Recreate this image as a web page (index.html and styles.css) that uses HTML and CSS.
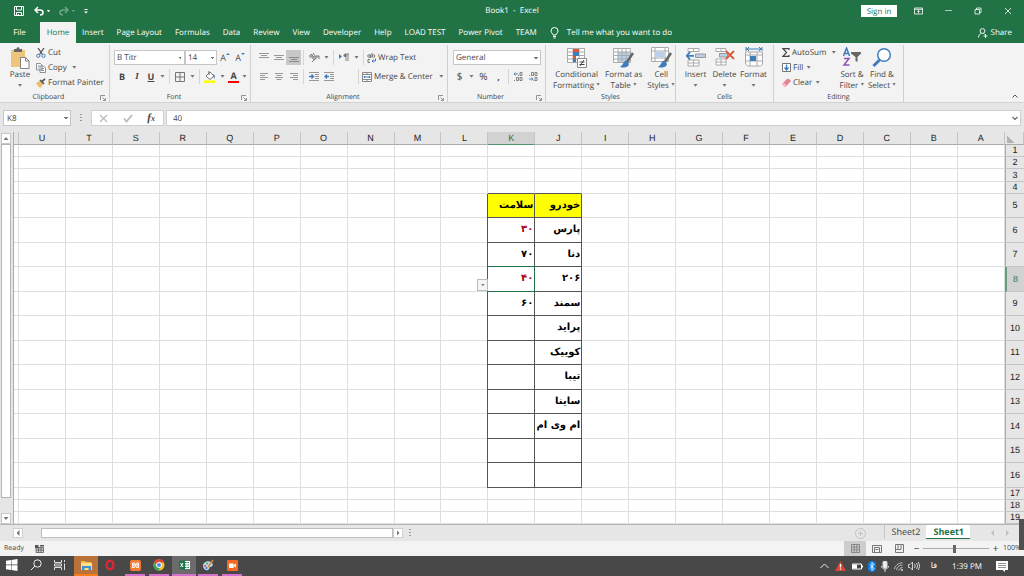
FILE: index.html
```html
<!DOCTYPE html>
<html lang="en">
<head>
<meta charset="utf-8">
<title>Book1 - Excel</title>
<link rel="stylesheet" href="styles.css">
</head>
<body>
<div class="app">
<header class="title">
  <div class="quick">
    <button aria-label="Save"><svg width="10" height="10" viewBox="0 0 10 10" fill="none" stroke="#fff"><path d="M.5.5h9v9h-9zM2.5.5v3.500h5v-3.500M2.500 9.500v-3h5v3M4.500 8v1.500"/></svg></button>
    <button aria-label="Undo"><svg width="10" height="10" viewBox="0 0 10 10" fill="none" stroke="#fff" stroke-width="1.500"><path d="M4 1 1 4l3 3M1 4h5c4 0 4 5 0 5"/></svg></button><i class="caret light"></i>
    <button class="dim" aria-label="Redo"><svg width="10" height="10" viewBox="0 0 10 10" fill="none" stroke="#fff" stroke-width="1.500"><path d="m6 1 3 3-3 3M9 4H4C0 4 0 9 4 9"/></svg></button><i class="caret light dim"></i>
    <button class="custom" aria-label="Customize"><svg width="4" height="5" viewBox="0 0 5 6" fill="#fff"><path d="M.5 0h4v1h-4zM0 3h5L2.500 5.500z"/></svg></button>
  </div>
  <h1>Book1&nbsp; -&nbsp; Excel</h1>
  <div class="window">
    <button class="signin">Sign in</button>
    <button aria-label="Ribbon display"><svg width="9" height="8" viewBox="0 0 9 8" fill="none" stroke="#fff" stroke-width=".8"><path d="M.5 1h8v6h-8zM.5 2.300h8M4.500 6.500v-3M3 4.800l1.500-1.500L6 4.800"/></svg></button>
    <button aria-label="Minimize"><svg width="8" height="8" viewBox="0 0 8 8" stroke="#a9cab6"><path d="M1 3.500h7"/></svg></button>
    <button aria-label="Restore"><svg width="8" height="8" viewBox="0 0 8 8" fill="none" stroke="#fff" stroke-width=".8"><path d="M1 2.500h4.500V7H1zM2.500 2.500V1H7v4.500H5.500"/></svg></button>
    <button aria-label="Close"><svg width="8" height="8" viewBox="0 0 8 8" stroke="#fff" stroke-width=".8"><path d="m1 1 6 6m0-6L1 7"/></svg></button>
  </div>
</header>
<nav class="tabs">
  <button>File</button><button class="on">Home</button><button>Insert</button><button>Page Layout</button><button>Formulas</button><button>Data</button><button>Review</button><button>View</button><button>Developer</button><button>Help</button><button>LOAD TEST</button><button>Power Pivot</button><button>TEAM</button>
  <button class="tell"><svg width="9" height="12" viewBox="0 0 9 12" fill="none" stroke="#fff"><path d="M3 8C3 6.500 1 6 1 4a3.500 3.500 0 0 1 7 0c0 2-2 2.500-2 4zM3 9.500h3M3.500 11h2"/></svg>Tell me what you want to do</button>
  <button class="share"><svg width="10" height="10" viewBox="0 0 10 10" fill="none" stroke="#fff" stroke-width=".9"><circle cx="4.500" cy="3" r="2.400"/><path d="M.5 9.500C.5 7 2 5.500 3.500 5.500M5.500 5.500l1 .8M7.500 6v4M5.500 8h4"/></svg>Share</button>
</nav>
<section class="ribbon">
  <div class="group clipboard">
    <div class="body">
      <button class="big"><svg width="20" height="22" viewBox="0 0 20 22"><path d="M1 3h14v17H1z" fill="#eec57c"/><path d="M4 2h2.500c0-2.500 3-2.500 3 0H12v3H4z" fill="#666"/><path d="M10.500 10.500h5l3.500 3.500v7.500h-8.500z" fill="#fff" stroke="#777" stroke-width=".9"/><path d="M15.500 10.500V14H19" fill="none" stroke="#777" stroke-width=".9"/></svg><span>Paste</span><i class="caret"></i></button>
      <div class="stack">
        <button><svg width="10" height="10" viewBox="0 0 10 10" fill="none"><path d="m2 0 4.500 6.500M8 0 3.500 6.500" stroke="#555" stroke-width="1.300"/><circle cx="2.300" cy="7.800" r="1.600" stroke="#4a7db5"/><circle cx="7.500" cy="7.800" r="1.600" stroke="#4a7db5"/></svg>Cut</button>
        <button><svg width="10" height="10" viewBox="0 0 10 10" fill="#fff" stroke="#777" stroke-width=".8"><path d="M.5.5h4l1.500 1.500v5H.5zM4 3h3.500l2 2v4.500H4z"/><path d="M1.800 3h2M1.800 5h1M5.500 5.500h2.500M5.500 7.500h2.500" stroke="#3f7cba"/></svg>Copy<i class="caret"></i></button>
        <button><svg width="10" height="10" viewBox="0 0 10 10"><path d="M0 5 4 3l3 3-2.500 4C3 9.500 1 7.500 0 5z" fill="#edbd6e"/><path d="m4 2 4 4M5.500 4 9 .8" stroke="#555" stroke-width="1.700"/></svg>Format Painter</button>
      </div>
    </div>
    <footer>Clipboard<svg class="launch" width="6" height="6" viewBox="0 0 6 6" fill="none" stroke="#888" stroke-width=".9"><path d="M.5 5V.5H5M2.500 2.500l2.500 2.500M5.500 3v2.500H3"/></svg></footer>
  </div>
  <div class="group font">
    <div class="body rows">
      <div class="row"><select class="face" aria-label="Font"><option>B Titr</option></select><select class="size" aria-label="Font size"><option>14</option></select><button class="w16 grow" aria-label="Increase font size">A<svg width="4" height="9" viewBox="0 0 4 9" fill="#3f7cba"><path d="M0 2h4L2 0z"/></svg></button><button class="w14 grow" aria-label="Decrease font size">A<svg width="4" height="9" viewBox="0 0 4 9" fill="#3f7cba"><path d="M0 0h4L2 2z"/></svg></button></div>
      <div class="row">
        <button class="w16"><b>B</b></button><button class="w14"><em>I</em></button><button class="w14"><u>U</u></button><i class="caret"></i><i class="sep"></i>
        <button class="w16"><svg width="10" height="10" viewBox="0 0 10 10" fill="none" stroke="#777"><path d="M.5.5h9v9h-9zM5 .5v9M.5 5h9"/></svg></button><i class="caret"></i><i class="sep"></i>
        <button class="w16"><svg width="12" height="12" viewBox="0 0 12 12"><path d="m2 5 4-4 4 4-4 3.500z" fill="#fff" stroke="#777"/><path d="M5 0v4" stroke="#666"/><path d="M9 3c2 1 2 3 1.500 5L9 5z" fill="#3f7cba"/><path d="M0 9.500h11V12H0z" fill="#ff0"/></svg></button><i class="caret"></i>
        <button class="acolor">A</button><i class="caret"></i>
      </div>
    </div>
    <footer>Font<svg class="launch" width="6" height="6" viewBox="0 0 6 6" fill="none" stroke="#888" stroke-width=".9"><path d="M.5 5V.5H5M2.500 2.500l2.500 2.500M5.500 3v2.500H3"/></svg></footer>
  </div>
  <div class="group align">
    <div class="body rows">
      <div class="row">
        <button class="w15"><svg width="10" height="10" viewBox="0 0 10 10" stroke="#999"><path d="M0 .5h10M2 2.500h6M0 4.500h10"/></svg></button><button class="w15"><svg width="10" height="10" viewBox="0 0 10 10" stroke="#999"><path d="M0 2.500h10M2 4.500h6M0 6.500h10"/></svg></button><button class="w15 pressed"><svg width="10" height="10" viewBox="0 0 10 10" stroke="#888"><path d="M0 4.500h10M2 6.500h6M0 8.500h10"/></svg></button><i class="sep"></i>
        <button class="w16"><svg width="11" height="11" viewBox="0 0 11 11" fill="none" stroke="#777"><path d="M3 10 9.500 4M7 4h3v3"/><circle cx="2" cy="4" r="1.300"/><circle cx="5" cy="6" r="1.300"/><path d="m2.500 2 2 3M4 1l3 4"/></svg></button><i class="caret"></i><i class="sep"></i>
        <button class="w16"><svg width="10" height="9" viewBox="0 0 10 9"><path d="m0 1 3 2.500L0 6z" fill="#3f7cba"/><path d="M7 1v7M9 1v7M5.500 1H10" stroke="#777" stroke-width=".9"/><circle cx="6" cy="2.500" r="1.500" fill="#777"/></svg></button><i class="caret"></i><i class="sep"></i>
        <button class="wide"><svg width="9" height="10" viewBox="0 0 9 10" fill="none" stroke="#777"><circle cx="2" cy="3" r="1.300"/><path d="M3.500 1.500V5M5 0v4.500"/><circle cx="6.500" cy="3" r="1.300"/><path d="M3 6.500H1v3h2"/><path d="M8.500 5.500v2.500H5M6.500 6.500 5 8l1.500 1.500" stroke="#3f7cba"/></svg>Wrap Text</button>
      </div>
      <div class="row">
        <button class="w15"><svg width="8" height="8" viewBox="0 0 8 8" stroke="#999"><path d="M0 .5h8M0 2.500h5M0 4.500h8M0 6.500h5"/></svg></button><button class="w15"><svg width="8" height="8" viewBox="0 0 8 8" stroke="#999"><path d="M0 .5h8M1.500 2.500h5M0 4.500h8M1.500 6.500h5"/></svg></button><button class="w15"><svg width="8" height="8" viewBox="0 0 8 8" stroke="#999"><path d="M0 .5h8M3 2.500h5M0 4.500h8M3 6.500h5"/></svg></button><i class="sep"></i>
        <button class="w15"><svg width="10" height="9" viewBox="0 0 10 9"><path d="M0 .5h10M6 2.500h4M6 4.500h4M6 6.500h4M0 8.500h10" stroke="#999"/><path d="M0 4.500h4M2.500 2.500l2 2-2 2" stroke="#3f7cba" stroke-width="1.300" fill="none"/></svg></button><button class="w15"><svg width="10" height="9" viewBox="0 0 10 9"><path d="M0 .5h10M6 2.500h4M6 4.500h4M6 6.500h4M0 8.500h10" stroke="#999"/><path d="M1 4.500h4M3 2.500l-2 2 2 2" stroke="#3f7cba" stroke-width="1.300" fill="none"/></svg></button><i class="fill"></i><i class="sep"></i>
        <button class="wide"><svg width="10" height="10" viewBox="0 0 10 10"><path d="M.5.5h9v9h-9z" fill="#fff"/><path d="M.5.5h9v9h-9zM.5 2.500h9M.5 7.500h9M5 .5v2M5 7.500v2" fill="none" stroke="#888"/><path d="M1.500 5h7M3 4 2 5l1 1M7 4l1 1-1 1" stroke="#3f7cba" fill="none"/></svg>Merge &amp; Center<i class="caret"></i></button>
      </div>
    </div>
    <footer>Alignment<svg class="launch" width="6" height="6" viewBox="0 0 6 6" fill="none" stroke="#888" stroke-width=".9"><path d="M.5 5V.5H5M2.500 2.500l2.500 2.500M5.500 3v2.500H3"/></svg></footer>
  </div>
  <div class="group number">
    <div class="body rows">
      <div class="row"><select class="general" aria-label="Number format"><option>General</option></select></div>
      <div class="row"><button class="w15 sym">$</button><i class="caret"></i><button class="w15 sym">%</button><button class="w15 sym"><b>,</b></button><i class="sep"></i><button class="w15"><svg width="9" height="9" viewBox="0 0 9 9" fill="none" stroke="#777" stroke-width=".9"><path d="M4 2H0M1.500.5 0 2l1.500 1.500" stroke="#3f7cba"/><path d="M6 .5h2v3H6zM2.500 5.500h2v3h-2zM6 5.500h2v3H6zM4.500 3v1M.5 8v1"/></svg></button><button class="w15"><svg width="9" height="9" viewBox="0 0 9 9" fill="none" stroke="#777" stroke-width=".9"><path d="M2.500.5h2v3h-2zM6 .5h2v3H6zM6 5.500h2v3H6zM.5 3v1M5 8v1"/><path d="M0 7h4M2.500 5.500 4 7 2.500 8.500" stroke="#3f7cba"/></svg></button></div>
    </div>
    <footer>Number<svg class="launch" width="6" height="6" viewBox="0 0 6 6" fill="none" stroke="#888" stroke-width=".9"><path d="M.5 5V.5H5M2.500 2.500l2.500 2.500M5.500 3v2.500H3"/></svg></footer>
  </div>
  <div class="group styles">
    <div class="body">
      <button class="big"><svg width="20" height="22" viewBox="0 0 20 22"><path d="M.5 1.500h17v14H.5zM.5 5h17M.5 8.500h17M.5 12h17M6 1.500v14M12 1.500v14" fill="#fff" stroke="#aaa"/><path d="M6 2h3v3H6zM6 9h3v3H6z" fill="#d85a3a"/><path d="M6 5h6v4H6zM6 12h3v3H6z" fill="#3f7cba"/><path d="M9 2h3v3H9z" fill="#d85a3a"/><path d="M10.500 11.500h9v9h-9z" fill="#fff" stroke="#888"/><path d="M12.500 15h5M12.500 17.500h5M17 13l-4 6" stroke="#444"/></svg><span>Conditional<br>Formatting <i class="caret"></i></span></button>
      <button class="big"><svg width="21" height="22" viewBox="0 0 21 22"><path d="M.5 1.500h17v14H.5z" fill="#fff"/><path d="M5 5h12v10H5z" fill="#b9d0e8"/><path d="M.5 1.500h17v14H.5zM.5 5h17M.5 8.500h17M.5 12h17M5 1.500v14M9 1.500v14M13 1.500v14" fill="none" stroke="#aaa"/><path d="m20 6-6 9" stroke="#666" stroke-width="2.500"/><path d="M14 14c-4-1-3 4-7 6 4 1 8 1 9-3z" fill="#3f7cba"/></svg><span>Format as<br>Table <i class="caret"></i></span></button>
      <button class="big"><svg width="21" height="22" viewBox="0 0 21 22"><path d="M.5.500h17v14H.5zM.5 4h17M.5 11h17M4 .500v14M14 .500v14" fill="#fff" stroke="#aaa"/><path d="M4.500 4.500h9v6h-9z" fill="#b9d0e8"/><path d="m20 6-6 9" stroke="#666" stroke-width="2.500"/><path d="M14 14c-4-1-3 4-7 6 4 1 8 1 9-3z" fill="#3f7cba"/></svg><span>Cell<br>Styles <i class="caret"></i></span></button>
    </div>
    <footer>Styles</footer>
  </div>
  <div class="group cells">
    <div class="body">
      <button class="big"><svg width="20" height="22" viewBox="0 0 20 22"><path d="M2 1.500h11v3H2zM7.500 1.500v3M2 13h11v6H2zM2 16h11M7.500 13v6" fill="#fff" stroke="#aaa"/><path d="M9.500 7h10v3.500h-10z" fill="#b9d0e8" stroke="#999"/><path d="M0 8.800h8M4 5 .8 8.800 4 12.500" fill="none" stroke="#3f7cba" stroke-width="1.800"/></svg><span>Insert</span><i class="caret"></i></button>
      <button class="big"><svg width="20" height="22" viewBox="0 0 20 22"><path d="M1 1.500h10v3H1zM6 1.500v3M1 12h10v6H1zM1 15h10M6 12v6" fill="#fff" stroke="#aaa"/><path d="M4.500 6.500h8V10h-8z" fill="#b9d0e8" stroke="#999"/><path d="m11 4 8 8M19 4l-8 8" stroke="#d85a3a" stroke-width="1.800"/></svg><span>Delete</span><i class="caret"></i></button>
      <button class="big"><svg width="20" height="22" viewBox="0 0 20 22"><path d="M1.500 5h17v12l-2 2H4l-2.500-2zM1.500 8h17M1.500 14h17M6 5v14M13 5v14" fill="#fff" stroke="#aaa"/><path d="M6 9h6v5H6z" fill="#3f7cba"/><path d="M2 2h16M2 0v4M18 0v4M5 0 3 2l2 2M15 0l2 2-2 2" fill="none" stroke="#3f7cba"/></svg><span>Format</span><i class="caret"></i></button>
    </div>
    <footer>Cells</footer>
  </div>
  <div class="group editing">
    <div class="body">
      <div class="stack">
        <button><svg width="8" height="9" viewBox="0 0 8 9" fill="none" stroke="#444" stroke-width="1.200"><path d="M7 2V.7H1L4.500 4.500 1 8.300h6V7"/></svg>AutoSum<i class="caret"></i></button>
        <button><svg width="9" height="9" viewBox="0 0 9 9" fill="#fff" stroke="#777"><path d="M.5.5h8v8h-8z"/><path d="M4.500 1.500v5M2.500 4.500l2 2.500 2-2.500" fill="none" stroke="#3f7cba" stroke-width="1.300"/></svg>Fill<i class="caret near"></i></button>
        <button><svg width="9" height="9" viewBox="0 0 9 9"><path d="m0 6 5-5q2-1 4 2L4 8.500H2z" fill="#e78294"/><path d="m0 6 1.500-1.500L5 8 4 8.500H2z" fill="#f7bcc5"/></svg>Clear<i class="caret near"></i></button>
      </div>
      <button class="big"><svg width="20" height="22" viewBox="0 0 20 22" fill="none"><path d="M1.500 9 4.500 1l3 8M2.500 6.500h4" stroke="#3f7cba" stroke-width="1.500"/><path d="M2 11.500h5L2 18h5.500" stroke="#9151b5" stroke-width="1.500"/><path d="M9 5h10v1.500L15.500 10v5l-2-1v-4L9 6.500z" fill="#666"/></svg><span>Sort &amp;<br>Filter <i class="caret"></i></span></button>
      <button class="big"><svg width="20" height="22" viewBox="0 0 20 22" fill="none" stroke="#3f7cba"><circle cx="12" cy="8" r="6.300" fill="#fff" stroke-width="1.500"/><path d="m7.500 13-6 6" stroke-width="3"/></svg><span>Find &amp;<br>Select <i class="caret"></i></span></button>
    </div>
    <footer>Editing</footer>
  </div>
  <button class="collapse" aria-label="Collapse ribbon"><svg width="6" height="4" viewBox="0 0 6 4" fill="none" stroke="#555"><path d="m.5 3.500 2.500-2.500 2.500 2.500"/></svg></button>
</section>
<section class="formula">
  <select aria-label="Name box"><option>K8</option></select>
  <i class="dots"></i>
  <div class="tools"><button aria-label="Cancel"><svg width="9" height="9" viewBox="0 0 9 9" stroke="#bbb" stroke-width="1.300"><path d="m1 1 7 7m0-7L1 8"/></svg></button><button aria-label="Enter"><svg width="10" height="9" viewBox="0 0 10 9" fill="none" stroke="#bbb" stroke-width="1.800"><path d="M1 4.500 3.500 7.500 9 1"/></svg></button><button class="fx" aria-label="Insert function">f<small>x</small></button></div>
  <div class="entry"><input aria-label="Formula" value="40"><svg width="6" height="5" viewBox="0 0 6 5" fill="none" stroke="#666" stroke-width="1.200"><path d="m.5 1 2.500 2.500L5.500 1"/></svg></div>
</section>
<main class="sheet">
  <div class="vscroll"><button aria-label="Scroll up"><i class="tri up"></i></button><span class="thumb"></span><button aria-label="Scroll down"><i class="tri down"></i></button></div>
  <table class="grid" id="grid"></table>
</main>
<section class="sheetbar">
  <button class="arrow" aria-label="Scroll left"><i class="tri left"></i></button><div class="hscroll"></div><button class="arrow" aria-label="Scroll right"><i class="tri right"></i></button><i class="dots"></i>
  <div class="names"><button class="add" aria-label="New sheet"><svg width="11" height="11" viewBox="0 0 11 11" fill="none" stroke="#c3c3c3"><circle cx="5.500" cy="5.500" r="5"/><path d="M5.500 3v5M3 5.500h5"/></svg></button><button class="tab">Sheet2</button><button class="tab on">Sheet1</button><button class="step" aria-label="Previous sheet"><i class="tri left pale"></i></button><button class="step" aria-label="Next sheet"><i class="tri right pale"></i></button></div>
</section>
<section class="status">
  <span>Ready</span>
  <svg width="9" height="8" viewBox="0 0 9 8" fill="none" stroke="#666" stroke-width=".9"><path d="M1 2.500h7.500v5H1zM1 4h7.500M1 5.700h7.500M3.500 2.500v5M6 2.500v5"/><path d="M0 0h3.500v3H0zM5 0h4v1.500H5z" fill="#555" stroke="none"/></svg>
  <div class="views">
    <button class="on" aria-label="Normal"><svg width="9" height="9" viewBox="0 0 9 9" fill="none" stroke="#888"><path d="M.5.5h8v8h-8zM3.200.5v8M5.800.5v8M.5 3.200h8M.5 5.800h8"/></svg></button><button aria-label="Page layout"><svg width="10" height="8" viewBox="0 0 10 8" fill="none" stroke="#777"><path d="M.5.5h9v7h-9zM2.500 2.500h5v5h-5zM3.500 4.500h3"/></svg></button><button aria-label="Page break"><svg width="9" height="9" viewBox="0 0 9 9" fill="none" stroke="#777"><path d="M.5.5h8v8h-8zM3 .5v5M6 .5v5M.5 5.500H6"/></svg></button>
    <button class="zoom" aria-label="Zoom out">−</button><input type="range" min="10" max="196" value="100" aria-label="Zoom"><button class="zoom" aria-label="Zoom in">+</button><span class="pct">100%</span>
  </div>
</section>
<span class="shade"></span>
<footer class="taskbar">
  <button aria-label="Start"><svg width="12" height="12" viewBox="0 0 12 12" fill="#fff"><path d="M0 1.700 5 1v4.500H0zM5.500.900 11.500 0v5.500h-6zM0 6.200h5V11L0 10.300zM5.500 6.200h6V12l-6-.900z"/></svg></button>
  <button aria-label="Search"><svg width="12" height="12" viewBox="0 0 12 12" fill="none" stroke="#eee"><circle cx="7.500" cy="4.500" r="3.700"/><path d="M5 7 1 11"/></svg></button>
  <button aria-label="Task view"><svg width="12" height="12" viewBox="0 0 12 12" fill="none" stroke="#ddd"><path d="M.5 1v2.500h7V1M.5 11V8.500h7V11M.5 5v2h7V5zM10.500 1v2M10.500 4.500V11"/></svg></button>
  <button class="orange" aria-label="File Explorer"><svg width="11" height="10" viewBox="0 0 11 10"><path d="M0 1h4l1 1h5v7H0z" fill="#f2bc45"/><path d="M0 3h11v7H0z" fill="#ffe08a"/><path d="M1 6h9v4H7.500V8h-4v2H1z" fill="#3f91cf"/></svg></button>
  <button aria-label="Opera"><svg width="12" height="12" viewBox="0 0 12 12"><ellipse cx="6" cy="6" rx="3.500" ry="4.300" fill="none" stroke="#e12635" stroke-width="2.400"/></svg></button>
  <button class="run" aria-label="XAMPP"><svg width="11" height="11" viewBox="0 0 11 11"><rect width="11" height="11" rx="2" fill="#f37b32"/><path d="M2.500 3h2l2 4.500h2V5.500l-2-.5h2V3h-2l-2 4.500h-2v-2l2-.5h-2z" fill="none" stroke="#fff"/></svg></button>
  <button class="run" aria-label="Chrome"><svg width="12" height="12" viewBox="0 0 12 12"><circle cx="6" cy="6" r="5.500" fill="#f5c52b"/><path d="M1 3.500a5.500 5.500 0 0 1 10.200 0H6L4 7z" fill="#df4937"/><path d="M1 3.500 4 8l3 .5-1.500 3A5.500 5.500 0 0 1 1 3.500z" fill="#3ca557"/><circle cx="6" cy="6" r="2.500" fill="#4b8be8" stroke="#fff"/></svg></button>
  <button class="run active" aria-label="Excel"><svg width="11" height="10" viewBox="0 0 11 10"><path d="M5 1h6v8H5z" fill="#fff"/><path d="M6 2.500h1.500M8.500 2.500H10M6 5h1.500M8.500 5H10M6 7.500h1.500M8.500 7.500H10" stroke="#1b7948"/><path d="m0 1 6-1v10L0 9z" fill="#1b7948"/><path d="m1.500 3 2.500 4M4 3 1.500 7" stroke="#fff"/></svg></button>
  <button class="run" aria-label="Paint"><svg width="12" height="12" viewBox="0 0 12 12"><path d="M1 7c0-4 5-6 8-4s2 5-1 5c-1 0 0 2-2 3S1 10 1 7z" fill="#b8d7ed"/><circle cx="3" cy="7" r="1" fill="#e34b3d"/><circle cx="5" cy="4.500" r="1" fill="#49a853"/><circle cx="4.500" cy="9" r="1" fill="#4668b9"/><path d="m6 8 5-7" stroke="#d28b36" stroke-width="1.500"/></svg></button>
  <button class="run" aria-label="Recorder"><svg width="11" height="11" viewBox="0 0 11 11"><rect width="11" height="11" rx="1" fill="#f46a25"/><path d="M2 3.500h4.500V5L9 3.500v4L6.500 6v2H2z" fill="#fff"/></svg></button>
  <div class="tray">
    <svg width="9" height="6" viewBox="0 0 9 6" fill="none" stroke="#eee"><path d="M.5 5 4.500 1l4 4"/></svg>
    <svg class="alert" width="11" height="10" viewBox="0 0 11 10"><path d="M5.500 0 11 10H0z" fill="#dd4435"/><path d="M5.500 3v3.500M5.500 7.500v1.300" stroke="#fff" stroke-width="1.300"/></svg>
    <svg width="11" height="7" viewBox="0 0 11 7" fill="none" stroke="#fff"><path d="M.5 1h9v5h-9zM10.500 2.500v2"/><path d="M1 1.500h4v4H1z" fill="#fff" stroke="none"/></svg>
    <svg width="8" height="11" viewBox="0 0 8 11"><rect width="8" height="11" rx="4" fill="#087de5"/><path d="m2 3.500 4 4-2 2V1.500l2 2-4 4" fill="none" stroke="#fff" stroke-width=".9"/></svg>
    <svg width="8" height="11" viewBox="0 0 8 11" fill="none" stroke="#ddd"><rect x="2" y="0" width="4" height="7" rx="1.500" fill="#eee"/><path d="M.5 5c0 4 7 4 7 0M4 8v3"/></svg>
    <svg width="9" height="9" viewBox="0 0 9 9" fill="none" stroke="#ccc" stroke-width=".9"><path d="M.5 7C1 4 4 .8 8.500.8M2.500 8C3 5 5 3 8.500 3M4.500 8.500C5 7 6.500 5.500 8.500 5.500"/><circle cx="7.800" cy="8" r=".8" fill="#ccc"/></svg>
    <svg width="12" height="10" viewBox="0 0 12 10" fill="none" stroke="#ddd" stroke-width=".9"><path d="M.5 3.500H2L4.500 1v8L2 6.500H.5zM6.500 3q1.500 2 0 4M8.500 2q2.500 3 0 6M10.300 1q3 4 0 8"/></svg>
    <span class="lang" lang="fa">فا</span><time>1:39 PM</time>
    <svg width="12" height="11" viewBox="0 0 12 11"><path d="M0 0h12v9H9v2L6.500 9H0z" fill="#fff"/><path d="M2 2.500h8M2 4.500h8M2 6.500h8" stroke="#777" stroke-width=".8"/></svg>
  </div>
</footer>
</div>
<script src="grid.js"></script>
</body>
</html>
```
FILE: grid.js
```js
const letters = "UTSRQPONMLKJIHGFEDCBA".split("");
const cars = ["پارس", "دنا", "۲۰۶", "سمند", "پراید", "کوییک", "تیبا", "ساینا", "ام وی ام", "", ""];
const health = ["۳۰", "۷۰", "۴۰", "۶۰"];
const grid = document.getElementById("grid");

function cell(row, letter) {
  const td = row.insertCell();
  if (letter) td.dataset.col = letter;
  return td;
}

const head = grid.createTHead().insertRow();
["", ...letters, ""].forEach((letter, i) => {
  const th = document.createElement("th");
  th.textContent = letter;
  if (i === 0) th.className = "edge";
  if (letter === "K") th.className = "current";
  if (i === letters.length + 1) th.className = "corner";
  head.append(th);
});

const body = grid.createTBody();
for (let n = 1; n <= 19; n++) {
  const row = body.insertRow();
  const inTable = n >= 5 && n <= 16;
  row.className = inTable ? (n % 2 ? "tall" : "taller") : (n === 3 ? "medium" : "short");
  cell(row);
  for (const letter of letters) {
    const td = cell(row, letter);
    if (letter !== "K" && letter !== "J") continue;
    if (n === 4) td.className = "cap";
    if (!inTable) continue;
    td.className = "boxed";
    td.lang = "fa";
    td.dir = "rtl";
    if (n === 5) {
      td.classList.add("heading");
      td.textContent = letter === "K" ? "سلامت" : "خودرو";
    } else {
      td.textContent = (letter === "K" ? health : cars)[n - 6] || "";
    }
    if (letter === "K" && (n === 6 || n === 8)) td.classList.add("low");
    if (letter === "K" && n === 7) td.classList.add("above");
    if (letter === "K" && n === 8) {
      td.classList.add("selected");
      const button = document.createElement("button");
      button.className = "pick";
      button.setAttribute("aria-label", "Choose value");
      button.innerHTML = '<i class="caret"></i>';
      td.append(button);
    }
  }
  const th = document.createElement("th");
  th.textContent = n;
  if (n === 8) th.className = "current";
  row.append(th);
}
```
FILE: styles.css
```css
* { box-sizing: border-box; }
body { margin: 0; font: 8px/11px "Open Sans", "Noto Sans", sans-serif; text-rendering: geometricPrecision; color: #444; background: #e6e6e6; overflow: hidden; }
button, select, input { font: inherit; color: inherit; text-rendering: inherit; border: 0; padding: 0; margin: 0; background: none; min-width: 0; }
button { display: flex; align-items: center; justify-content: center; white-space: nowrap; }
svg { flex: none; display: block; }
.app { display: flex; flex-direction: column; height: 100vh; position: relative; }

.caret { display: inline-block; flex: none; width: 5px; height: 3px; margin: 0 3px; background: #777; clip-path: polygon(10% 0, 90% 0, 50% 90%); }
.light { background: #fff; }
.dim { opacity: .35; }

.title { display: grid; grid-template-columns: 1fr auto 1fr; align-items: center; height: 22px; flex: none; background: #217346; color: #fff; }
.title h1 { margin: 0; padding-bottom: 1px; font: inherit; }
.quick { display: flex; align-items: center; padding-left: 14px; }
.quick button + button { margin-left: 10px; }
.quick .caret { margin: 0 8px 0 2px; }
.quick .custom { margin-left: 0; }
.window { display: flex; justify-content: flex-end; align-items: center; padding-right: 1px; }
.window button { width: 30px; height: 20px; }
.window .signin { width: 36px; height: 12px; background: #fff; color: #217346; margin-right: 6px; }

.tabs { display: flex; height: 21px; flex: none; background: #217346; color: #fff; padding-left: 4px; }
.tabs button { padding: 0 6px 0 7px; }
.tabs button:first-child { width: 36px; padding-right: 12px; }
.tabs .on { background: #f3f3f3; color: #217346; width: 36px; padding: 0; }
.tabs .on + button { padding-left: 6px; }
.tabs .tell { gap: 8px; }
.tabs .share { gap: 3px; margin-left: auto; padding-right: 12px; }

.ribbon { display: flex; height: 60px; flex: none; background: #f3f3f3; border-bottom: 1px solid #d2d2d2; }
.group { display: flex; flex-direction: column; justify-content: space-between; border-right: 1px solid #d0d0d0; margin-top: 2px; padding-top: 2px; flex: none; }
.group .body { display: flex; }
.group footer { position: relative; text-align: center; font-size: 7px; line-height: 9px; padding-right: 12px; }
.styles footer, .cells footer, .editing footer { padding-right: 0; }
.launch { position: absolute; right: 3px; top: 2px; }
.big { flex-direction: column; justify-content: flex-start; line-height: 11px; }
.big > .caret { margin-top: 4px; }
.big span .caret { width: 4px; margin: 0 0 2px; }
.stack { display: flex; flex-direction: column; }
.stack button { justify-content: flex-start; height: 15px; gap: 2px; }
.clipboard { width: 110px; }
.clipboard .big { width: 28px; margin-left: 6px; }
.clipboard .stack { margin: -2px 0 0 2px; }
.font { width: 141px; }
.align { width: 197px; }
.number { width: 98px; }
.rows { flex-direction: column; gap: 4px; padding: 3px 0 0 4px; }
.row { display: flex; align-items: center; height: 15px; }
.row .caret { margin: 0 2px; }
.sep { width: 1px; height: 15px; background: #d5d5d5; margin: 0 2px; flex: none; }
.w14 { width: 14px; } .w15 { width: 15px; } .w16 { width: 16px; }
.row button { height: 15px; flex: none; }
.row b, .row em, .row u { font-size: 9px; font-weight: 700; }
.row em { font-family: "Liberation Serif", serif; }
select { appearance: none; height: 15px; border-radius: 0; }
.row select, .formula select { background: #fff conic-gradient(from -45deg at 50% 100%, #777 25%, transparent 0) no-repeat right 2px center / 4px 2px; border: 1px solid #c6c6c6; padding-left: 2px; }
.face { width: 71px; }
.size { width: 32px; }
.general { width: 88px; margin-left: 1px; }
.grow { color: #555; font-size: 9px; }
.row .acolor { font-size: 9px; font-weight: 700; line-height: 9px; height: 12px; width: 11px; margin: 0 1px; border-bottom: 2px solid #f00; }
.align .rows { padding-left: 5px; }
.pressed { background: #c8c8c8; }
.wide { gap: 2px; margin-left: 1px; }
.row .wide .caret { margin-left: 4px; }
.fill { width: 20px; }
.sym { font-size: 10px; }
.styles { width: 130px; }
.styles .body { padding-left: 7px; gap: 5px; }
.cells { width: 98px; }
.cells .body { padding-left: 5px; }
.cells .big { width: 29px; }
.editing { width: 130px; }
.editing .stack { width: 54px; margin: -2px 1px 0 8px; }
.editing .big { width: 30px; }
.near { margin-left: 1px; }
.collapse { margin-left: auto; align-self: flex-end; padding: 4px 6px; }

.formula { display: flex; height: 29px; flex: none; padding: 7px 3px 6px; background: #e6e6e6; }
.formula > select { width: 68px; height: 16px; padding-left: 3px; }
.dots { width: 2px; height: 8px; margin: 4px 9px; background: repeating-linear-gradient(#999 0 1px, transparent 1px 3px); }
.tools { display: flex; width: 73px; height: 16px; background: #fff; border: 1px solid #d0d0d0; }
.tools button { flex: 1; }
.fx { font: italic 700 11px/12px "Liberation Serif", serif; }
.fx small { font-size: 8px; align-self: flex-end; }
.entry { display: flex; align-items: center; flex: 1; height: 16px; margin-left: 2px; background: #fff; border: 1px solid #d0d0d0; padding: 0 2px 0 6px; }
.entry input { flex: 1; }

.sheet { display: flex; flex: 1; min-height: 0; overflow: hidden; border-bottom: 1px solid #b5b5b5; }
.vscroll { display: flex; flex-direction: column; width: 14px; padding: 1px 2px 0 1px; border-right: 1px solid #ababab; flex: none; }
.vscroll button { height: 11px; background: #fff; border: 1px solid #c8c8c8; flex: none; }
.vscroll .thumb { height: 354px; background: #fff; border: 1px solid #b5b5b5; }
.vscroll button:last-child { margin-top: auto; }
.tri { width: 5px; height: 3px; background: #777; }
.up { clip-path: polygon(50% 0, 100% 100%, 0 100%); }
.down { clip-path: polygon(0 0, 100% 0, 50% 100%); }
.left, .right { width: 3px; height: 6px; }
.left { clip-path: polygon(0 50%, 100% 0, 100% 100%); }
.right { clip-path: polygon(100% 50%, 0 0, 0 100%); }
.pale { background: #c0c0c0; }

.grid { flex: 1; width: 100%; align-self: flex-start; table-layout: fixed; border-collapse: separate; border-spacing: 0; background: #fff; }
.grid th, .grid td { padding: 0; border: solid #dedede; border-width: 0 1px 1px 0; }
.grid th { background: #e6e6e6; color: #222; font: 9px/11px "Liberation Sans", sans-serif; text-align: center; }
.grid thead th { height: 13px; padding-top: 1px; border-color: #ababab; border-right-color: #c4c4c4; }
.grid .edge { width: 5px; }
.grid .corner { width: 19px; background: #e6e6e6 linear-gradient(45deg, #b2b2b2 50%, transparent 50%) no-repeat 2px 3px / 8px 8px; }
.grid tbody th { border-color: #c4c4c4; border-right: 0; border-left: 1px solid #ababab; }
.short { height: 12px; }
.medium { height: 13px; }
.tall { height: 24px; }
.taller { height: 25px; }
.grid .current { background: #d2d2d2; color: #217346; }
.grid thead .current { border-bottom-color: #4f9670; }
.grid tbody .current { border-left: 2px solid #5f9f7c; }
.grid .cap { border-bottom-color: #555; }
.grid .boxed { border-color: #555; font: 700 10px/13px "DejaVu Sans", sans-serif; color: #000; text-align: right; padding: 0 2px 1px 0; white-space: nowrap; position: relative; }
.grid .boxed[data-col="K"] { box-shadow: -1px 0 #555; }
.grid .heading { background: #ff0; }
.grid .boxed.low { color: #a8000c; }
.grid .boxed.above { border-bottom-color: #217346; }
.grid .boxed.selected { box-shadow: -1px 0 #217346; border-color: #217346; }
.pick { position: absolute; right: 100%; bottom: 0; width: 11px; height: 12px; margin-right: 1px; background: #f5f5f5; border: 1px solid #bbb; }

.sheetbar { display: flex; align-items: center; height: 16px; flex: none; padding-left: 13px; background: #e6e6e6; }
.arrow { width: 10px; height: 10px; background: #fff; border: 1px solid #d0d0d0; }
.hscroll { width: 352px; height: 10px; margin-left: 18px; background: #fff; border: 1px solid #bdbdbd; }
.sheetbar .dots { margin: 0 6px; }
.names { display: flex; margin-left: auto; align-self: stretch; align-items: center; }
.add { margin-right: 18px; }
.tab { font-size: 9px; height: 14px; padding: 0 6px 1px 7px; align-self: flex-start; border-left: 1px solid #c5c5c5; }
.tab.on { background: #fff; color: #217346; font-weight: 700; border-left: 0; border-bottom: 1px solid #217346; }
.step { width: 15px; }
.tab + .step { margin-left: 15px; }
.step:last-child { margin-right: 9px; }

.status { display: flex; align-items: center; height: 15px; flex: none; background: #f3f3f3; padding-left: 4px; gap: 11px; font-size: 7px; }
.views { display: flex; align-items: center; margin-left: auto; align-self: stretch; }
.views button { width: 22px; align-self: stretch; }
.views .zoom { width: 13px; font-size: 10px; }
.views .on { background: #cdcdcd; }
.views input { appearance: none; width: 66px; height: 9px; background: linear-gradient(#aaa, #aaa) no-repeat center / 100% 1px; }
.views input::-webkit-slider-thumb { appearance: none; width: 3px; height: 8px; background: #666; }
.pct { width: 22px; overflow: hidden; padding-left: 1px; }
.shade { position: absolute; right: 0; bottom: 26px; width: 5px; height: 31px; background: #4f4f4f; }

.taskbar { display: flex; height: 20px; flex: none; background: #484848; color: #fff; }
.taskbar button { width: 24px; height: 20px; border-bottom: 2px solid transparent; }
.taskbar .orange { margin-left: 2px; background: #b9733a; border-color: #f57c16; }
.taskbar .orange + button { margin-right: 1px; }
.taskbar .run { border-color: #d870cf; width: 20px; margin: 0 2px; }
.taskbar .active { width: 24px; margin: 0 0 0 1px; background: #6b6b6b; }
.tray { display: flex; align-items: center; gap: 5px; margin-left: auto; padding-right: 16px; }
.alert { margin: 0 1px; }
.lang { font: 8px/10px "DejaVu Sans", sans-serif; margin: 0 5px 0 6px; }
.tray time { margin: 0 9px 0 5px; }
```
